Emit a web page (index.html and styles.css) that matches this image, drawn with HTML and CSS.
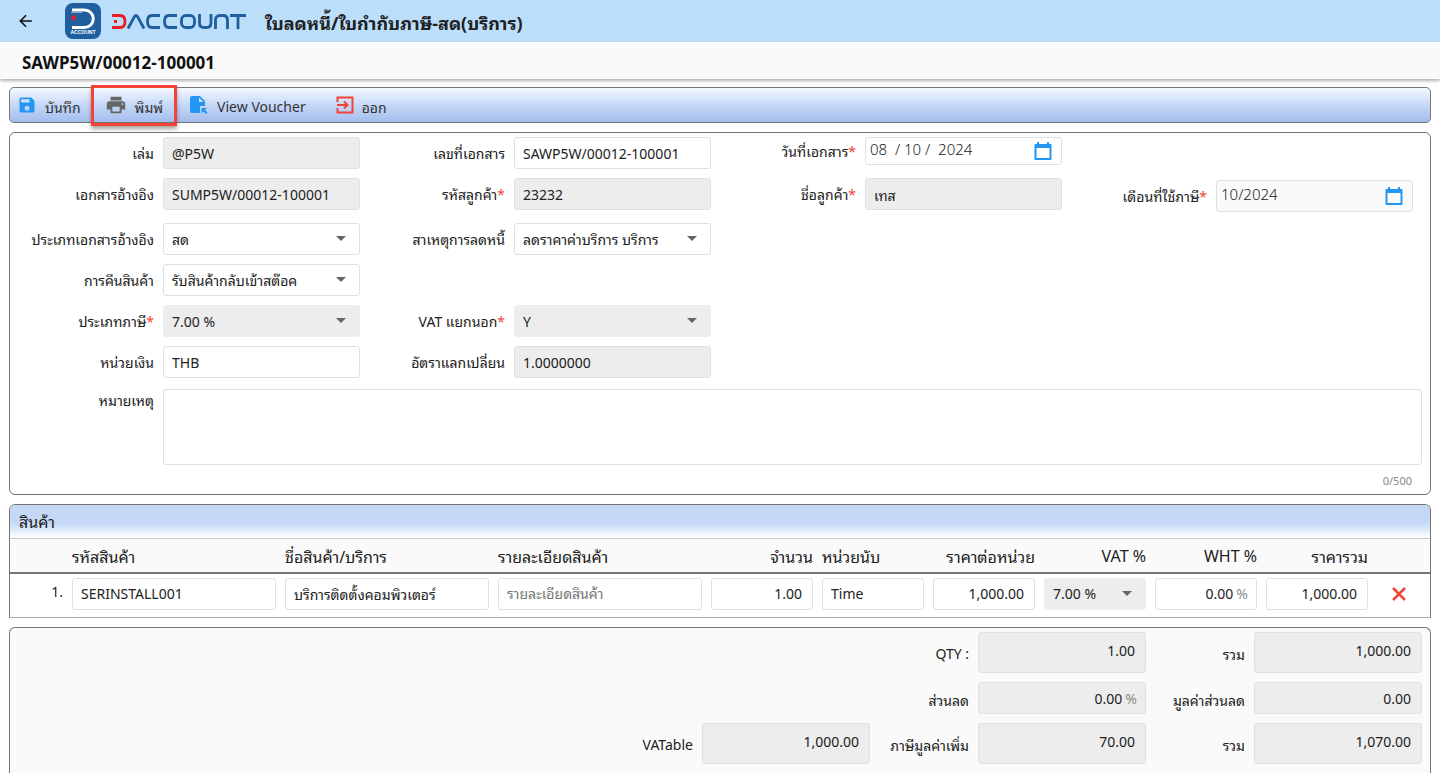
FILE: index.html
```html
<!DOCTYPE html>
<html lang="th">
<head>
    <meta charset="UTF-8">
    <meta name="viewport" content="width=device-width, initial-scale=1.0">
    <title>ใบลดหนี้/ใบกำกับภาษี-สด(บริการ)</title>
    <link rel="stylesheet" href="styles.css">
</head>
<body>
    <header class="app-bar">
        <button class="back" type="button" aria-label="Back">
            <svg width="24" height="24" viewBox="0 0 24 24"><path d="M20 11H7.830l5.590-5.590L12 4l-8 8 8 8 1.410-1.410L7.830 13H20z" fill="#111"/></svg>
        </button>
        <svg class="logo-mark" width="36" height="36" viewBox="0 0 36 36">
            <rect width="36" height="36" rx="8" fill="#1f5f9f"/>
            <path d="M7 7H19.500a8.500 8.500 0 0 1 0 17.500H7" fill="none" stroke="#fff" stroke-width="3"/>
            <path d="M6 9.500H17" stroke="#8fb0d0" stroke-width="1"/>
            <circle cx="8.500" cy="15" r="2.400" fill="#ed1c24"/>
            <path d="M8.500 11.500v2" stroke="#ed1c24" stroke-width="1"/>
            <text x="18" y="31" class="logo-caption">ACCOUNT</text>
        </svg>
        <svg class="logo-word" width="134" height="16" viewBox="0 0 134 16" fill="none" stroke-width="2.800" role="img" aria-label="DACCOUNT">
            <path d="M0 1.500H8Q13 1.500 13 7.500T8 13.500H0M2 7.500H5" stroke="#ed1c24"/>
            <g stroke="#1f5f9f">
                <path d="M16 14.500L22.500 2.500Q24 .5 25.500 2.500L32 14.500"/>
                <path d="M48 1.500H40Q35.500 1.500 35.500 7.500T40 13.500H48"/>
                <path d="M65 1.500H57Q52.500 1.500 52.500 7.500T57 13.500H65"/>
                <rect x="69.500" y="1.500" width="13" height="12" rx="4.500"/>
                <path d="M87.500 0V9Q87.500 13.500 92 13.500H94.500Q99 13.500 99 9V0"/>
                <path d="M103.500 15V6Q103.500 1.500 108 1.500H111Q115.500 1.500 115.500 6V15"/>
                <path d="M118 1.500H134M126 1.500V15"/>
            </g>
        </svg>
        <h1 class="title">ใบลดหนี้/ใบกำกับภาษี-สด(บริการ)</h1>
    </header>
    <div class="doc-bar"><h2>SAWP5W/00012-100001</h2></div>

    <main class="content">
        <div class="toolbar">
            <button class="tool" type="button">
                <svg width="20" height="20" viewBox="0 0 24 24"><path d="M17 3H5a2 2 0 0 0-2 2v14a2 2 0 0 0 2 2h14a2 2 0 0 0 2-2V7l-4-4zm-5 16a3 3 0 1 1 0-6 3 3 0 0 1 0 6zm3-10H5V5h10v4z" fill="#2196f3"/></svg>
                <span>บันทึก</span>
            </button>
            <button class="tool marked" type="button">
                <svg width="22" height="22" viewBox="0 0 24 24"><path d="M19 8H5a3 3 0 0 0-3 3v6h4v4h12v-4h4v-6a3 3 0 0 0-3-3zm-3 11H8v-5h8v5zm3-7a1 1 0 1 1 0-2 1 1 0 0 1 0 2zm-1-9H6v4h12V3z" fill="#666"/></svg>
                <span>พิมพ์</span>
            </button>
            <button class="tool voucher" type="button">
                <svg width="20" height="20" viewBox="0 0 20 20"><path d="M3 1h8l5 5v5h-5v7H3a2 2 0 0 1-2-2V3a2 2 0 0 1 2-2zm7 1.500V7h4.500z" fill="#2196f3"/><path d="M12.500 13H18l-2 2 2.500 2.500-1.500 1.500-2.500-2.500-2 2z" fill="#2196f3"/></svg>
                <span>View Voucher</span>
            </button>
            <button class="tool exit" type="button">
                <svg width="18" height="18" viewBox="0 0 18 18" fill="none" stroke="#f44336" stroke-width="2"><path d="M1.500 6V1.500H16.500V16.500H1.500V12M1 9H11.500M8 5.500L11.500 9L8 12.500"/></svg>
                <span>ออก</span>
            </button>
        </div>

        <form class="panel doc-form">
            <div class="form-grid">
                <div class="cell"><label for="book">เล่ม</label><input id="book" class="box off" value="@P5W" readonly></div>
                <div class="cell"><label for="docno">เลขที่เอกสาร</label><input id="docno" class="box" value="SAWP5W/00012-100001"></div>
                <div class="cell date-cell"><label for="docdate">วันที่เอกสาร<b>*</b></label>
                    <div class="box date"><input id="docdate" value="08  / 10 /  2024"><svg width="18" height="20" viewBox="0 0 18 20"><path d="M3 1h2v2h8V1h2v2h1.500q1 0 1 1V18q0 1-1 1H1.500q-1 0-1-1V4q0-1 1-1H3zM2.500 7v10h13V7z" fill="#2196f3"/></svg></div></div>
                <div class="cell"></div>

                <div class="cell"><label for="ref">เอกสารอ้างอิง</label><input id="ref" class="box off" value="SUMP5W/00012-100001" readonly></div>
                <div class="cell"><label for="custid">รหัสลูกค้า<b>*</b></label><input id="custid" class="box off" value="23232" readonly></div>
                <div class="cell"><label for="custname">ชื่อลูกค้า<b>*</b></label><input id="custname" class="box off" value="เทส" readonly></div>
                <div class="cell month"><label for="taxmonth">เดือนที่ใช้ภาษี<b>*</b></label>
                    <div class="box date"><input id="taxmonth" value="10/2024"><svg width="18" height="20" viewBox="0 0 18 20"><path d="M3 1h2v2h8V1h2v2h1.500q1 0 1 1V18q0 1-1 1H1.500q-1 0-1-1V4q0-1 1-1H3zM2.500 7v10h13V7z" fill="#2196f3"/></svg></div></div>

                <div class="cell"><label for="reftype">ประเภทเอกสารอ้างอิง</label><div class="pick"><select id="reftype" class="box"><option>สด</option></select></div></div>
                <div class="cell"><label for="reason">สาเหตุการลดหนี้</label><div class="pick"><select id="reason" class="box"><option>ลดราคาค่าบริการ บริการ</option></select></div></div>
                <div class="cell"></div>
                <div class="cell"></div>

                <div class="cell"><label for="returns">การคืนสินค้า</label><div class="pick"><select id="returns" class="box"><option>รับสินค้ากลับเข้าสต๊อค</option></select></div></div>
                <div class="cell"></div>
                <div class="cell"></div>
                <div class="cell"></div>

                <div class="cell"><label for="taxtype">ประเภทภาษี<b>*</b></label><div class="pick"><select id="taxtype" class="box off flat"><option>7.00 %</option></select></div></div>
                <div class="cell"><label for="vatout">VAT แยกนอก<b>*</b></label><div class="pick"><select id="vatout" class="box off flat"><option>Y</option></select></div></div>
                <div class="cell"></div>
                <div class="cell"></div>

                <div class="cell"><label for="currency">หน่วยเงิน</label><input id="currency" class="box" value="THB"></div>
                <div class="cell"><label for="rate">อัตราแลกเปลี่ยน</label><input id="rate" class="box off" value="1.0000000" readonly></div>
                <div class="cell"></div>
                <div class="cell"></div>

                <div class="cell wide"><label for="remark">หมายเหตุ</label><textarea id="remark" class="box" maxlength="500"></textarea></div>
            </div>
            <div class="counter">0/500</div>
        </form>

        <section class="items">
            <h3>สินค้า</h3>
            <table>
                <colgroup>
                    <col class="c-no"><col><col><col>
                    <col class="c-num"><col class="c-num"><col class="c-num"><col class="c-num"><col class="c-num"><col class="c-num">
                    <col class="c-del">
                </colgroup>
                <thead>
                    <tr>
                        <th></th>
                        <th>รหัสสินค้า</th>
                        <th>ชื่อสินค้า/บริการ</th>
                        <th>รายละเอียดสินค้า</th>
                        <th class="num">จำนวน</th>
                        <th>หน่วยนับ</th>
                        <th class="num">ราคาต่อหน่วย</th>
                        <th class="num">VAT %</th>
                        <th class="num">WHT %</th>
                        <th class="num">ราคารวม</th>
                        <th></th>
                    </tr>
                </thead>
                <tbody>
                    <tr>
                        <td class="num no">1.</td>
                        <td><input class="box" aria-label="รหัสสินค้า" value="SERINSTALL001"></td>
                        <td><input class="box" aria-label="ชื่อสินค้า/บริการ" value="บริการติดตั้งคอมพิวเตอร์"></td>
                        <td><input class="box" aria-label="รายละเอียดสินค้า" placeholder="รายละเอียดสินค้า"></td>
                        <td><input class="box num" aria-label="จำนวน" value="1.00"></td>
                        <td><input class="box" aria-label="หน่วยนับ" value="Time"></td>
                        <td><input class="box num" aria-label="ราคาต่อหน่วย" value="1,000.00"></td>
                        <td><div class="pick"><select class="box off flat" aria-label="VAT %"><option>7.00 %</option></select></div></td>
                        <td><div class="box unit"><input aria-label="WHT %" value="0.00"><span>%</span></div></td>
                        <td><input class="box num" aria-label="ราคารวม" value="1,000.00"></td>
                        <td class="del"><button type="button" aria-label="Delete"><svg width="16" height="16" viewBox="0 0 16 16" stroke="#f44336" stroke-width="2.500"><path d="M2 2L14 14M14 2L2 14"/></svg></button></td>
                    </tr>
                </tbody>
            </table>
        </section>

        <section class="panel totals">
            <div class="sum-grid">
                <label class="from-2" for="qty">QTY :</label><input id="qty" class="box off num tall" value="1.00" readonly>
                <label for="sub">รวม</label><input id="sub" class="box off num tall" value="1,000.00" readonly>
                <label class="from-2" for="disc">ส่วนลด</label><div class="box off unit"><input id="disc" value="0.00" readonly><span>%</span></div>
                <label for="discval">มูลค่าส่วนลด</label><input id="discval" class="box off num" value="0.00" readonly>
                <label for="vatable">VATable</label><input id="vatable" class="box off num tall" value="1,000.00" readonly>
                <label for="vat">ภาษีมูลค่าเพิ่ม</label><input id="vat" class="box off num tall" value="70.00" readonly>
                <label for="grand">รวม</label><input id="grand" class="box off num tall" value="1,070.00" readonly>
            </div>
        </section>
    </main>
</body>
</html>
```
FILE: styles.css
```css
* {
    box-sizing: border-box;
}

body {
    margin: 0;
    min-height: 100vh;
    display: flex;
    flex-direction: column;
    background: #fff;
    color: #212121;
    font-family: 'Noto Sans', 'Noto Sans Thai Looped', 'Noto Looped Thai', Sarabun, Loma, Garuda, sans-serif;
    font-size: 14px;
}

button,
input,
select,
textarea {
    font: inherit;
    color: inherit;
    margin: 0;
}

button {
    border: 0;
    padding: 0;
    background: none;
    cursor: pointer;
}

h1,
h2,
h3 {
    margin: 0;
}

/* Top bars */
.app-bar {
    display: flex;
    align-items: center;
    height: 42px;
    padding-left: 16px;
    background: #bbdefb;
}

.back {
    display: flex;
    margin-right: 30px;
}

.back svg {
    width: 19px;
}

.logo-mark {
    margin-right: 11px;
}

.logo-word {
    margin-top: 2px;
}

.logo-caption {
    font: bold 5px 'Liberation Sans', sans-serif;
    fill: #fff;
    text-anchor: middle;
}

.title {
    margin-left: 19px;
    padding-top: 2px;
    font-size: 18px;
}

.doc-bar {
    display: flex;
    align-items: center;
    height: 37px;
    padding: 4px 0 0 22px;
    background: #fafafa;
    box-shadow: 0 2px 3px rgba(0, 0, 0, 0.3);
}

.doc-bar h2 {
    font-size: 17px;
    color: #111;
}

.content {
    flex: 1;
    display: flex;
    flex-direction: column;
    gap: 9px;
    padding: 8px 9px 0;
}

/* Toolbar */
.toolbar {
    display: flex;
    height: 36px;
    border: 1px solid #757575;
    border-radius: 5px;
    background: linear-gradient(#f5f9ff, #c5d8f8 50%, #a3bdec);
}

.tool {
    position: relative;
    display: flex;
    align-items: center;
    gap: 8px;
    padding: 0 8px 0 7px;
    color: #333;
}

.tool span {
    padding-top: 2px;
}

.tool.marked {
    padding: 0 14px;
    margin-left: 2px;
}

.tool.marked::after {
    content: "";
    position: absolute;
    inset: -3px 0 -4px;
    border: 3px solid #f44336;
    box-shadow: 0 3px 4px rgba(0, 0, 0, 0.35);
}

.tool.voucher {
    padding: 0 16px 0 12px;
}

.tool.exit {
    padding: 0 14px;
}

/* Panels and fields */
.panel {
    border: 1px solid #757575;
    border-radius: 6px;
}

.box {
    width: 100%;
    height: 32px;
    padding: 0 8px;
    border: 1px solid #e0e0e0;
    border-radius: 3px;
    background: #fff;
    outline: 0;
}

.box.off {
    background: #ededed;
}

.box.flat {
    border-color: #ededed;
}

.box.num {
    padding-right: 10px;
    text-align: right;
}

.pick {
    position: relative;
    width: 100%;
}

.pick select {
    display: block;
    appearance: none;
}

.pick::after {
    content: "";
    position: absolute;
    top: 13px;
    right: 14px;
    border: 5px solid transparent;
    border-top-color: #666;
    border-bottom: 0;
    pointer-events: none;
}

.date,
.unit {
    display: flex;
    align-items: center;
}

.date input,
.unit input {
    flex: 1;
    min-width: 0;
    padding: 0;
    border: 0;
    background: none;
    outline: 0;
}

.date {
    height: 28px;
    padding: 0 9px 0 4px;
}

.date input {
    padding-bottom: 4px;
    font-size: 15px;
    font-weight: 300;
}

.unit input {
    text-align: right;
}

.unit span {
    margin-left: 3px;
    color: #8a8a8a;
}

.doc-form {
    padding: 4px 8px 0;
}

.form-grid {
    display: grid;
    grid-template-columns: repeat(4, minmax(0, 1fr));
    row-gap: 9px;
}

.cell {
    display: grid;
    grid-template-columns: 136px minmax(0, 1fr);
    column-gap: 9px;
    align-items: start;
    min-height: 32px;
    padding-right: 9px;
}

.cell label {
    padding-top: 2px;
    line-height: 30px;
    text-align: right;
    white-space: nowrap;
}

.cell b {
    color: #f44336;
    font-weight: normal;
    line-height: 1;
}

.cell.date-cell label {
    line-height: 26px;
}

.cell.month {
    min-height: 36px;
    padding-top: 2px;
}

.cell.month .date {
    height: 32px;
    background: #fafafa;
}

.cell.wide {
    grid-column: 1 / -1;
    padding-right: 0;
    padding-top: 2px;
}

.cell.wide label {
    padding-top: 0;
    line-height: 24px;
}

textarea.box {
    display: block;
    height: 76px;
    resize: none;
}

.counter {
    padding: 8px 10px 6px;
    color: #8a8a8a;
    font-size: 11px;
    line-height: 15px;
    text-align: right;
}

/* Item lines */
.items {
    border: 1px solid #757575;
    border-radius: 6px 6px 0 0;
    border-bottom-color: #aaa;
    overflow: hidden;
}

.items h3 {
    height: 34px;
    padding-left: 9px;
    border-bottom: 1px solid #ccc;
    background: linear-gradient(#c5d9f7 55%, #fff);
    font-size: 16px;
    font-weight: normal;
    line-height: 34px;
}

.items table {
    width: 100%;
    border-collapse: collapse;
    table-layout: fixed;
}

.items th {
    height: 34px;
    padding: 0 9px 0 0;
    border-bottom: 2px solid #757575;
    background: #fafafa;
    font-size: 16px;
    font-weight: normal;
    text-align: left;
    white-space: nowrap;
}

.items td {
    height: 44px;
    padding: 0 9px 4px 0;
}

.items th.num,
.items td.num {
    text-align: right;
}

.items .no {
    padding-bottom: 8px;
}

.c-no {
    width: 62px;
}

.c-num {
    width: 111px;
}

.c-del {
    width: 53px;
}

.items .del {
    padding-bottom: 0;
    text-align: center;
}

.del button {
    display: inline-flex;
}

/* Totals */
.totals {
    flex: 1;
    padding: 4px 8px 10px;
    border-bottom: 0;
    border-radius: 6px 6px 0 0;
    background: #fafafa;
}

.sum-grid {
    display: grid;
    grid-template-columns: repeat(3, 90px 168px);
    gap: 9px;
    align-items: center;
    justify-content: end;
}

.sum-grid label {
    padding-top: 2px;
    text-align: right;
    white-space: nowrap;
}

.sum-grid .from-2 {
    grid-column-start: 3;
}

.box.tall {
    height: 41px;
    padding-bottom: 5px;
}
```
